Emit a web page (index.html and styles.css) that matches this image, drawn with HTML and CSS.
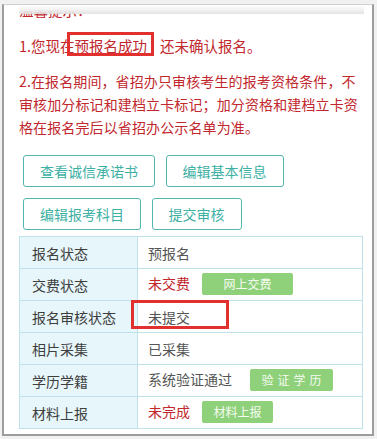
FILE: index.html
```html
<!DOCTYPE html>
<html lang="zh-CN">
<head>
<meta charset="utf-8">
<title>报名状态</title>
<link rel="stylesheet" href="styles.css">
</head>
<body>
<div class="frame">
  <div class="inner">
    <div class="cut"><span class="cut-text">温馨提示：</span></div>
    <p class="notice line1">1.您现在<span class="mark">预报名成功</span>还未确认报名。</p>
    <p class="notice para">2.在报名期间，省招办只审核考生的报考资格条件，不<br>审核加分标记和建档立卡标记；加分资格和建档立卡资<br>格在报名完后以省招办公示名单为准。</p>
    <div class="actions">
      <div class="btn-row">
        <button class="btn">查看诚信承诺书</button>
        <button class="btn">编辑基本信息</button>
      </div>
      <div class="btn-row">
        <button class="btn">编辑报考科目</button>
        <button class="btn">提交审核</button>
      </div>
    </div>
    <table class="status">
      <tr><td class="label">报名状态</td><td class="value">预报名</td></tr>
      <tr><td class="label">交费状态</td><td class="value"><span class="red">未交费</span><span class="gbtn pay">网上交费</span></td></tr>
      <tr><td class="label">报名审核状态</td><td class="value boxed">未提交<span class="redbox"></span></td></tr>
      <tr><td class="label">相片采集</td><td class="value">已采集</td></tr>
      <tr><td class="label">学历学籍</td><td class="value">系统验证通过<span class="gbtn verify">验证学历</span></td></tr>
      <tr><td class="label">材料上报</td><td class="value"><span class="red">未完成</span><span class="gbtn material">材料上报</span></td></tr>
    </table>
  </div>
</div>
</body>
</html>
```
FILE: styles.css
```css
html, body {
  margin: 0;
  padding: 0;
}
body {
  background: #f1f1f1;
  font-family: "Noto Sans CJK SC", "Noto Sans", sans-serif;
}
.frame {
  margin: 4px 3px 0 2px;
  height: 429px;
  background: #fff;
  border-top: 1px solid #cfcfcf;
  border-left: 2px solid #9c9c9c;
  border-right: 2px solid #9c9c9c;
  border-bottom: 2px solid #9c9c9c;
}
.inner {
  height: 424px;
  overflow: hidden;
  padding-left: 15px;
}
.cut {
  position: relative;
  height: 13px;
  overflow: hidden;
}
.cut-text {
  display: block;
  margin-top: -7px;
  font-size: 14.5px;
  line-height: 23px;
  color: #c1272d;
}
.cut::after {
  content: "";
  position: absolute;
  left: 0;
  right: 8px;
  top: 0;
  height: 9px;
  background: linear-gradient(to bottom, #ffffff 0%, #f4f4f4 45%, rgba(222, 222, 222, 0.85) 100%);
}
.notice {
  margin: 0;
  color: #c1272d;
  line-height: 23px;
}
.line1 {
  margin-top: 16px;
  font-size: 14.5px;
}
.mark {
  position: relative;
  margin-right: 13px;
}
.mark::after {
  content: "";
  position: absolute;
  left: -8px;
  right: -7px;
  top: -3px;
  bottom: 0;
  border: 3px solid #e2302e;
}
.para {
  margin-top: 13px;
  font-size: 14px;
  letter-spacing: 0.12px;
  white-space: nowrap;
}
.actions {
  margin-top: 16px;
  margin-left: 4px;
  display: flex;
  flex-direction: column;
  gap: 11px;
}
.btn-row {
  display: flex;
  gap: 10.5px;
}
.btn {
  height: 32px;
  padding: 0 16px;
  margin: 0;
  background: #fff;
  border: 1.5px solid #52b8ad;
  border-radius: 3px;
  color: #3db0a4;
  font-family: "Noto Sans CJK SC", "Noto Sans", sans-serif;
  font-size: 14px;
  line-height: 28px;
}
.status {
  margin-top: 6px;
  width: 344px;
  border-collapse: collapse;
  font-size: 14px;
}
.status td {
  height: 32px;
  padding: 0;
  border: 1px solid #bfe2ea;
  box-sizing: border-box;
  vertical-align: middle;
}
.status .label {
  width: 118px;
  padding-left: 12px;
  background: #e6f6fa;
  color: #3e3e3e;
}
.status .value {
  padding-left: 10px;
  color: #555;
  background: #fff;
}
.boxed {
  position: relative;
}
.redbox {
  position: absolute;
  left: -7px;
  top: -1px;
  width: 98px;
  height: 29px;
  box-sizing: border-box;
  border: 3px solid #e2302e;
}
.red {
  color: #c1272d;
}
.gbtn {
  display: inline-block;
  vertical-align: middle;
  height: 22px;
  line-height: 22px;
  border-radius: 2px;
  background: #8fd17a;
  color: #f4fbf1;
  font-size: 12px;
  text-align: center;
  margin-left: 12px;
  position: relative;
  top: -1px;
}
.pay {
  width: 91px;
}
.verify {
  width: 83px;
  margin-left: 18px;
  letter-spacing: 4px;
  text-indent: 4px;
}
.material {
  width: 71px;
}
```
